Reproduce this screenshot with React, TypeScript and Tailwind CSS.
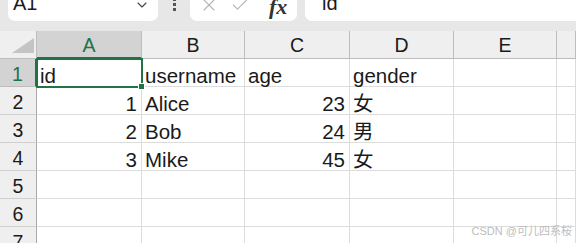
import { Check, ChevronDown, X } from 'lucide-react'

const cols = ['A', 'B', 'C', 'D', 'E', '']

type Cell = { v: string; num?: boolean }

const rows: Cell[][] = [
  [{ v: 'id' }, { v: 'username' }, { v: 'age' }, { v: 'gender' }, { v: '' }, { v: '' }],
  [{ v: '1', num: true }, { v: 'Alice' }, { v: '23', num: true }, { v: '女' }, { v: '' }, { v: '' }],
  [{ v: '2', num: true }, { v: 'Bob' }, { v: '24', num: true }, { v: '男' }, { v: '' }, { v: '' }],
  [{ v: '3', num: true }, { v: 'Mike' }, { v: '45', num: true }, { v: '女' }, { v: '' }, { v: '' }],
  [{ v: '' }, { v: '' }, { v: '' }, { v: '' }, { v: '' }, { v: '' }],
  [{ v: '' }, { v: '' }, { v: '' }, { v: '' }, { v: '' }, { v: '' }],
  [{ v: '' }, { v: '' }, { v: '' }, { v: '' }, { v: '' }, { v: '' }],
]

const font = { fontFamily: '"Liberation Sans", "Noto Sans CJK SC", sans-serif' }

export default function App() {
  return (
    <div
      className="relative h-[243px] w-[576px] overflow-hidden bg-[#e7e7e7] text-[#1a1a1a]"
      style={font}
    >
      {/* 名称框 / 编辑栏（顶部被裁掉一截） */}
      <div className="-mt-[11px] flex h-[32px] items-stretch">
        <div className="ml-[8px] flex w-[150px] items-start justify-between rounded-[7px] bg-white pl-[5px] pr-[8px] pt-[4px]">
          <span className="text-[20px] leading-none">A1</span>
          <ChevronDown className="mt-[4px] h-[16px] w-[16px] text-[#444]" strokeWidth={1.6} />
        </div>
        <div className="flex w-[32px] flex-col items-center gap-[2px] pt-[9px]">
          <span className="h-[3px] w-[3px] bg-[#555]" />
          <span className="h-[3px] w-[3px] bg-[#555]" />
          <span className="h-[3px] w-[3px] bg-[#555]" />
        </div>
        <div className="flex w-[107px] items-start rounded-[7px] bg-white pl-[9px] pt-[6px]">
          <X className="h-[20px] w-[20px] text-[#b4b4b4]" strokeWidth={1.3} />
          <Check className="ml-[11px] h-[20px] w-[20px] text-[#b4b4b4]" strokeWidth={1.3} />
          <span
            className="ml-[19px] mt-[1px] text-[22px] font-bold italic leading-none text-[#333]"
            style={{ fontFamily: '"Liberation Serif", serif' }}
          >
            fx
          </span>
        </div>
        <div className="ml-[8px] flex flex-1 items-start rounded-l-[7px] bg-white pl-[17px] pt-[4px]">
          <span className="text-[20px] leading-none">id</span>
        </div>
      </div>

      {/* 表格 */}
      <div className="relative mt-[10px] grid grid-cols-[37px_105px_103px_105px_104px_103px_1fr] grid-rows-[28px_repeat(7,28px)] bg-white">
        <div className="relative border-b border-r border-[#bdbdbd] bg-[#efefef]">
          <svg className="absolute right-[2px] bottom-[5px]" width="22" height="15" viewBox="0 0 22 15">
            <polygon points="22,0 22,15 0,15" fill="#c4c4c4" />
          </svg>
        </div>
        {cols.map((c, i) => (
          <div
            key={'h' + i}
            className={`flex items-center justify-center pt-[3px] text-[19.5px] leading-none ${
              i === 0
                ? 'border-b-2 border-r border-b-[#217346] border-r-[#bdbdbd] bg-[#d3d3d3] text-[#217346]'
                : 'border-b border-r border-[#bdbdbd] bg-[#efefef]'
            }`}
          >
            {c}
          </div>
        ))}

        {rows.map((r, ri) => (
          <div key={'r' + ri} className="contents">
            <div
              className={`flex items-center justify-center pt-[4px] text-[19.5px] leading-none ${
                ri === 0
                  ? 'border-b border-r-2 border-b-[#bdbdbd] border-r-[#217346] bg-[#d3d3d3] text-[#217346]'
                  : 'border-b border-r border-b-[#cfcfcf] border-r-[#a8a8a8] bg-[#efefef]'
              }`}
            >
              {ri + 1}
            </div>
            {r.map((cell, ci) => (
              <div
                key={ci}
                className={`flex items-end border-b border-r border-[#dcdcdc] text-[20.5px] leading-none ${
                  cell.num ? 'justify-end pr-[4px]' : 'justify-start pl-[3px]'
                }`}
              >
                {cell.v}
              </div>
            ))}
          </div>
        ))}

        {/* 选中单元格 A1 */}
        <div className="pointer-events-none absolute left-[36px] top-[27px] h-[30px] w-[107px] border-2 border-[#217346]">
          <div className="absolute -bottom-[4px] -right-[4px] h-[7px] w-[7px] border border-white bg-[#217346]" />
        </div>
      </div>

      <div className="pointer-events-none absolute bottom-[6px] right-[4px] text-[11px] leading-none text-[#bdbdbd]">
        CSDN @可儿四系桜
      </div>
    </div>
  )
}
